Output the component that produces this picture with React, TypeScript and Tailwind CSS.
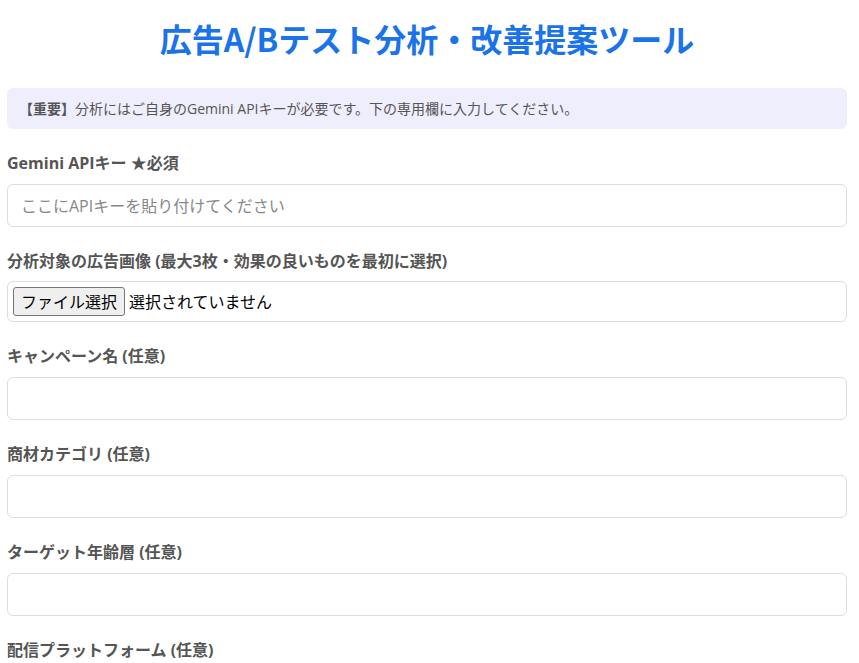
import React from 'react';

const font = { fontFamily: '"Open Sans", "Noto Sans CJK JP", "Noto Sans", sans-serif' };

interface FieldProps {
  label: string;
  placeholder?: string;
}

const TextField: React.FC<FieldProps> = ({ label, placeholder }) => (
  <div className="mb-[23px]">
    <label className="block text-[16px] leading-[22px] font-bold text-[#555] mb-[10px]">{label}</label>
    <input
      type="text"
      placeholder={placeholder}
      className="block w-full h-[43px] px-[13px] text-[16px] text-[#333] border border-[#dddddd] rounded-md bg-white placeholder:text-[#888] focus:outline-none"
    />
  </div>
);

export default function App() {
  return (
    <div className="min-h-screen bg-white" style={font}>
      <div className="ml-[7px] w-[840px]">
        <h1
          className="mt-[15px] text-center text-[32px] leading-[46px] font-bold text-[#1a73e8]"
          style={{ fontFamily: '"Noto Sans CJK JP", sans-serif' }}
        >
          広告A/Bテスト分析・改善提案ツール
        </h1>

        <div className="mt-[27px] mb-[23px] rounded-md bg-[#efeefd] px-[12px] py-[10px] text-[14px] leading-[21px] text-[#555]">
          <span className="font-bold">【重要】</span>分析にはご自身のGemini APIキーが必要です。下の専用欄に入力してください。
        </div>

        <TextField label="Gemini APIキー ★必須" placeholder="ここにAPIキーを貼り付けてください" />

        <div className="mb-[23px]">
          <label className="block text-[16px] leading-[22px] font-bold text-[#555] mb-[9px]">
            分析対象の広告画像 (最大3枚・効果の良いものを最初に選択)
          </label>
          <div className="flex items-center h-[41px] px-[5px] border border-[#dddddd] rounded-md bg-white">
            <button className="h-[29px] px-[7px] text-[16px] leading-none text-black bg-[#efefef] border border-[#767676] rounded-[3px]">
              ファイル選択
            </button>
            <span className="ml-[4px] text-[16px] text-black">選択されていません</span>
          </div>
        </div>

        <TextField label="キャンペーン名 (任意)" />
        <TextField label="商材カテゴリ (任意)" />
        <TextField label="ターゲット年齢層 (任意)" />
        <TextField label="配信プラットフォーム (任意)" />
      </div>
    </div>
  );
}
